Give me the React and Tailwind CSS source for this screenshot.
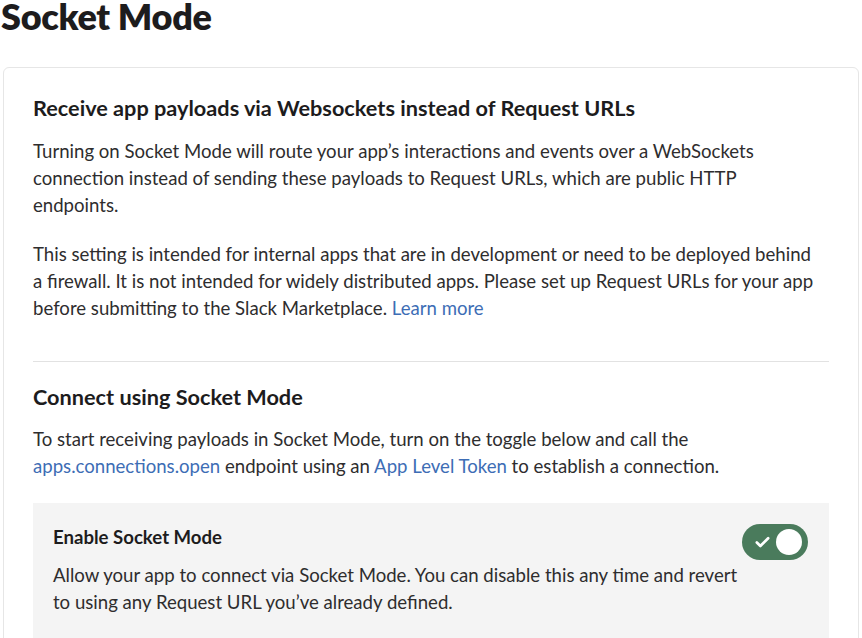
import { Check } from 'lucide-react';

const linkCls = 'text-[#3d6db5]';
const bodyCls = 'text-[18.6px] leading-[27px] text-[#2e2d2e]';

function Toggle() {
  return (
    <div className="w-[66px] h-[36px] rounded-full bg-[#4a7b5c] flex items-center justify-between pl-[12px] pr-[6px] shrink-0">
      <Check className="w-[17px] h-[17px] text-white" strokeWidth={3.8} />
      <div className="w-[26px] h-[26px] rounded-full bg-white" />
    </div>
  );
}

export default function App() {
  return (
    <div className="h-[638px] overflow-hidden bg-white text-[#1d1c1d] font-['Lato','Noto_Sans',sans-serif]">
      <h1 className="text-[36px] leading-[32px] font-extrabold tracking-[-0.3px] pl-[1px]">Socket Mode</h1>

      <div className="mt-[35px] mx-[3px] border border-[#e6e6e6] rounded-[6px] px-[29px] pt-[25px]">
        <section>
          <h2 className="text-[21.7px] leading-[30px] font-bold">Receive app payloads via Websockets instead of Request URLs</h2>
          <p className={`mt-[15px] max-w-[788px] ${bodyCls}`}>
            Turning on Socket Mode will route your app’s interactions and events over a WebSockets connection instead of sending these payloads to Request URLs, which are public HTTP endpoints.
          </p>
          <p className={`mt-[22px] max-w-[788px] ${bodyCls}`}>
            This setting is intended for internal apps that are in development or need to be deployed behind a firewall. It is not intended for widely distributed apps. Please set up Request URLs for your app before submitting to the Slack Marketplace. <a className={linkCls}>Learn more</a>
          </p>
        </section>

        <hr className="mt-[39px] border-0 border-t border-[#e2e2e2]" />

        <section className="pt-[20px]">
          <h2 className="text-[21.7px] leading-[30px] font-bold">Connect using Socket Mode</h2>
          <p className={`mt-[14px] max-w-[788px] ${bodyCls}`}>
            To start receiving payloads in Socket Mode, turn on the toggle below and call the <a className={linkCls}>apps.connections.open</a> endpoint using an <a className={linkCls}>App Level Token</a> to establish a connection.
          </p>

          <div className="mt-[23px] bg-[#f4f4f4] pl-[20px] pr-[21px] pt-[21px] pb-[30px] flex items-start">
            <div className="flex-1">
              <h3 className="text-[18.6px] leading-[27px] font-bold">Enable Socket Mode</h3>
              <p className={`mt-[11px] ${bodyCls}`}>
                Allow your app to connect via Socket Mode. You can disable this any time and revert to using any Request URL you’ve already defined.
              </p>
            </div>
            <Toggle />
          </div>
        </section>
      </div>
    </div>
  );
}
